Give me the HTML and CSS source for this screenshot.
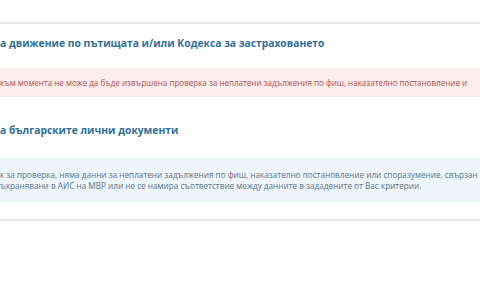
FILE: index.html
```html
<!DOCTYPE html>
<html lang="bg">
<head>
<meta charset="utf-8">
<link rel="stylesheet" href="styles.css">
</head>
<body>
<div class="page">
  <div class="panel">
    <h3 class="sec-title first">а движение по пътищата и/или Кодекса за застраховането</h3>
    <div class="alert danger">към момента не може да бъде извършена проверка за неплатени задължения по фиш, наказателно постановление и</div>
    <h3 class="sec-title second">а българските лични документи</h3>
    <div class="alert info">
      <div class="line">к за проверка, няма данни за неплатени задължения по фиш, наказателно постановление или споразумение, свързан</div>
      <div class="line">ъхранявани в АИС на МВР или не се намира съответствие между данните в зададените от Вас критерии.</div>
    </div>
  </div>
</div>
</body>
</html>
```

FILE: styles.css
```css
html, body {
  margin: 0;
  padding: 0;
  background: #ffffff;
}
.page {
  width: 480px;
  height: 285px;
  padding-top: 22px;
  box-sizing: border-box;
  overflow: hidden;
  font-family: "Open Sans", "Noto Sans", sans-serif;
}
.panel {
  border-top: 2px solid #e9e9e9;
  border-bottom: 2px solid #e9e9e9;
  padding-bottom: 17px;
}
.sec-title {
  margin: 0;
  font-size: 10.3px;
  line-height: 14px;
  font-weight: 700;
  color: #2f6f98;
  white-space: nowrap;
}
.sec-title.first {
  padding-top: 12px;
  padding-bottom: 18px;
}
.sec-title.second {
  padding-top: 26px;
  padding-bottom: 21px;
}
.alert {
  white-space: nowrap;
}
.alert.danger {
  height: 29px;
  display: flex;
  align-items: center;
  background: #fbeded;
  color: #b0504e;
  font-size: 8.05px;
}
.alert.info {
  padding: 11px 0;
  background: #eef6fc;
  color: #5c7488;
  line-height: 11px;
  font-size: 8.2px;
}
```
